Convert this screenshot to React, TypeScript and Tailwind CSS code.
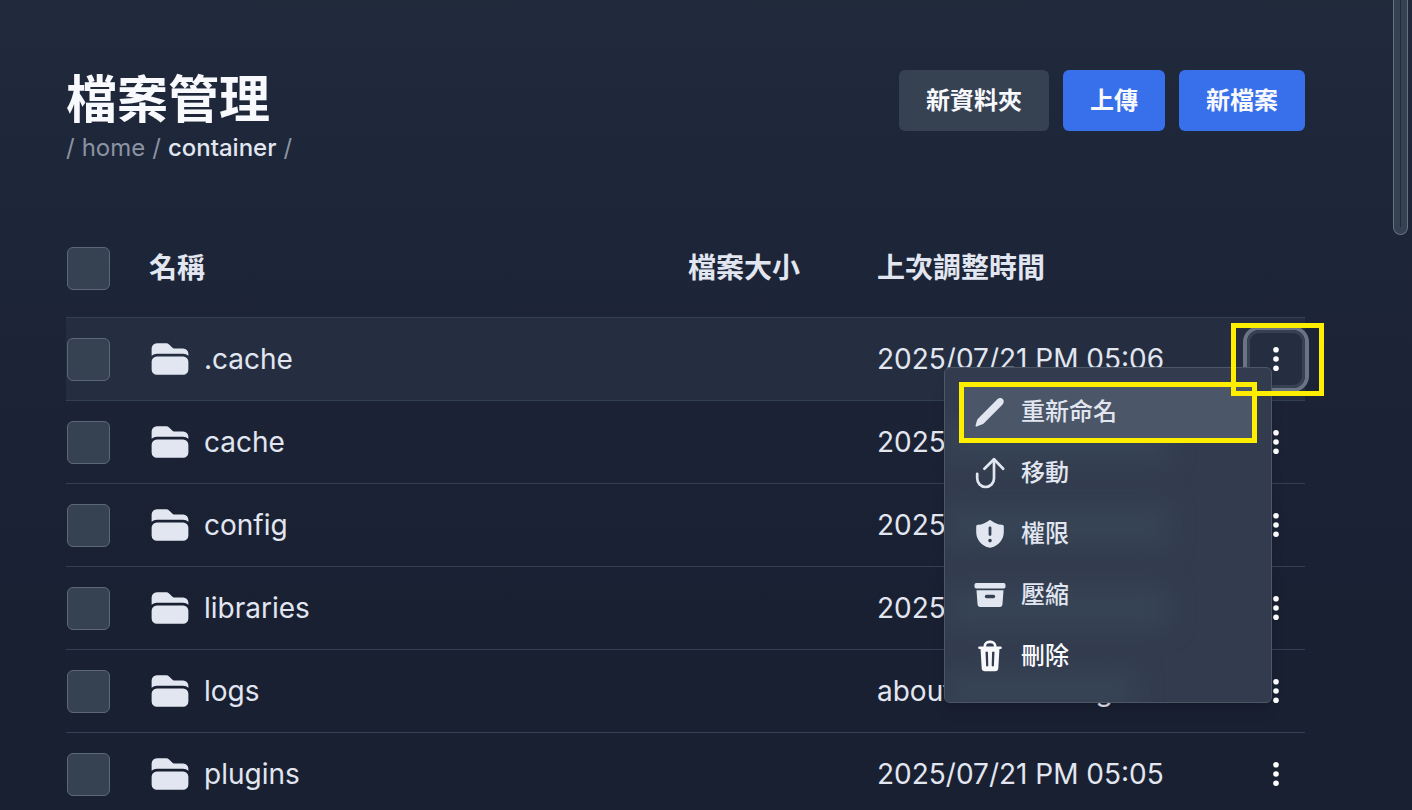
import type { ReactNode } from "react"
import { HiFolder } from "react-icons/hi2"

type Entry = {
  name: string
  modified: string
}

const entries: Entry[] = [
  { name: ".cache", modified: "2025/07/21 PM 05:06" },
  { name: "cache", modified: "2025/07/21 PM 05:05" },
  { name: "config", modified: "2025/07/21 PM 05:06" },
  { name: "libraries", modified: "2025/07/21 PM 05:05" },
  { name: "logs", modified: "about 12 hours ago" },
  { name: "plugins", modified: "2025/07/21 PM 05:05" },
]

function PencilIcon() {
  return (
    <svg viewBox="0 0 32 32" className="size-8" fill="currentColor" aria-hidden="true">
      <path d="M2.6 30.6c-.7.2-1.200-.3-1-1l1.200-4.700c.2-.8.6-1.500 1.200-2.100L22.600 3.900c2-2 4.500-2.400 6.100-1s1.400 4.200-.6 6.200L10.200 27c-.7.7-1.500 1.200-2.500 1.600z" />
    </svg>
  )
}

function MoveIcon() {
  return (
    <svg
      viewBox="0 0 32 32"
      className="size-8"
      fill="none"
      stroke="currentColor"
      strokeWidth="2.7"
      strokeLinecap="round"
      strokeLinejoin="round"
      aria-hidden="true"
    >
      <path d="M3.200 16.800v4.800a8.400 8.400 0 0 0 16.800 0V2.400" />
      <path d="M10.400 11.800L20 2.200l9.200 9.600" />
    </svg>
  )
}

function ShieldIcon() {
  return (
    <svg viewBox="0 0 32 32" className="size-8" fill="currentColor" aria-hidden="true">
      <path
        fillRule="evenodd"
        d="M14.600 2.700a2.200 2.200 0 0 1 2.800 0c3 2.400 6.500 3.800 10.600 4.100 1 .1 1.800.8 1.800 1.800v5.400c0 7.300-4.900 13.600-12.600 15.600a4.800 4.800 0 0 1-2.400 0C7.100 27.600 2.200 21.300 2.200 14V8.600c0-1 .8-1.700 1.800-1.800 4.100-.3 7.600-1.700 10.600-4.100ZM14.600 9.800v6.800a1.400 1.400 0 0 0 2.800 0V9.800a1.400 1.400 0 0 0-2.800 0ZM16 20.800a1.800 1.800 0 1 0 0 3.600 1.800 1.800 0 0 0 0-3.600Z"
      />
    </svg>
  )
}

function ArchiveIcon() {
  return (
    <svg viewBox="0 0 32 32" className="size-8" fill="currentColor" aria-hidden="true">
      <rect x="0.500" y="4" width="31" height="5.600" rx="1.800" />
      <path
        fillRule="evenodd"
        d="M2.500 11.300h27l-1 13.800a3 3 0 0 1-3 2.900h-19a3 3 0 0 1-3-2.900ZM12.500 15.800a1.700 1.700 0 0 0 0 3.400h7a1.700 1.700 0 0 0 0-3.400Z"
      />
    </svg>
  )
}

function TrashIcon() {
  return (
    <svg viewBox="0 0 32 32" className="size-8" fill="none" stroke="currentColor" aria-hidden="true">
      <path d="M10.800 7.500V6.300a4.400 4.400 0 0 1 4.400-4.400h1.600a4.400 4.400 0 0 1 4.400 4.400v1.200" strokeWidth="2.600" />
      <path d="M5.500 7.800h21" strokeWidth="2.600" strokeLinecap="round" />
      <path
        fill="currentColor"
        stroke="none"
        fillRule="evenodd"
        d="M6.500 8h19l-1.200 20.300a3.200 3.200 0 0 1-3.200 3H10.900a3.200 3.200 0 0 1-3.200-3ZM11.500 11.800l.6 13.600a1 1 0 0 0 2.200 0l-.4-13.600ZM18.100 11.800l-.4 13.600a1 1 0 0 0 2.200 0l.6-13.600Z"
      />
    </svg>
  )
}

const menuItems: { label: string; icon: ReactNode }[] = [
  { label: "重新命名", icon: <PencilIcon /> },
  { label: "移動", icon: <MoveIcon /> },
  { label: "權限", icon: <ShieldIcon /> },
  { label: "壓縮", icon: <ArchiveIcon /> },
  { label: "刪除", icon: <TrashIcon /> },
]

function Checkbox({ label }: { label: string }) {
  return (
    <input
      type="checkbox"
      aria-label={label}
      className="mt-px ml-px block size-[43px] appearance-none rounded-md border border-[#5d6877] bg-[#364252] checked:bg-blue-500"
    />
  )
}

function FileMenu() {
  return (
    <div
      role="menu"
      className="absolute top-[37px] right-[33px] z-10 w-[328px] overflow-hidden rounded-md border border-[#4c5868] bg-[#323c4e] px-[14px] pt-[14px] pb-[15px] text-2xl font-medium text-[#e2e6f0] shadow-lg"
    >
      {/* Frosted glow of the rows underneath */}
      <div aria-hidden="true" className="absolute inset-x-0 top-[54px] flex flex-col gap-[43px] blur-md">
        <div className="h-10 w-56 bg-[#374455]" />
        <div className="h-10 w-56 bg-[#374455]" />
        <div className="h-10 w-56 bg-[#374455]" />
        <div className="h-10 w-48 bg-[#374455]" />
      </div>
      {menuItems.map((item, index) => (
        <button
          key={item.label}
          type="button"
          role="menuitem"
          className={
            index === 0
              ? "relative flex h-[61px] w-full items-center gap-[15px] bg-[#4b5768] px-[15px]"
              : index === menuItems.length - 1
                ? "relative flex h-[61px] w-full items-center gap-[15px] px-[15px] text-[#f8f9fd]"
                : "relative flex h-[61px] w-full items-center gap-[15px] px-[15px]"
          }
        >
          {item.icon}
          <span>{item.label}</span>
          {index === 0 && <span className="absolute inset-0 border-5 border-[#ffee00]" />}
        </button>
      ))}
    </div>
  )
}

function RowActions({ name, open }: { name: string; open: boolean }) {
  return (
    <div className="relative size-[58px]">
      <button
        type="button"
        aria-label={name}
        className={
          open
            ? "flex size-full items-center justify-center rounded-xl border-3 border-[#364252] text-white ring-4 ring-[#6b7484]"
            : "flex size-full items-center justify-center rounded-xl text-white"
        }
      >
        <svg viewBox="0 0 6 24" className="h-6 w-[6px]" fill="currentColor" aria-hidden="true">
          <circle cx="3" cy="2.800" r="2.800" />
          <circle cx="3" cy="12" r="2.800" />
          <circle cx="3" cy="21.200" r="2.800" />
        </svg>
      </button>
      {open && (
        <>
          <FileMenu />
          <span className="pointer-events-none absolute -top-[7px] -right-[19px] -bottom-2 -left-4 z-20 border-5 border-[#ffee00]" />
        </>
      )}
    </div>
  )
}

export default function App() {
  return (
    <main className="relative h-screen overflow-hidden bg-linear-to-b from-[#202a3b] via-[#1d2538] via-30% to-[#192032] to-75% pt-[70px] pr-[107px] pl-[66px] font-['Inter','Noto_Sans_CJK_TC',sans-serif] text-[#e2e6f0]">
      <header className="flex items-start justify-between">
        <div>
          <h1 className="text-[51px] leading-[60px] font-bold text-[#f8f9fd]">檔案管理</h1>
          <nav className="flex gap-[7px] text-2xl leading-9 text-[#8b93a3]">
            <span>/</span>
            <a href="#home">home</a>
            <span>/</span>
            <a href="#container" className="font-medium text-[#e2e6f0]">
              container
            </a>
            <span>/</span>
          </nav>
        </div>
        <div className="flex gap-[14px] text-2xl font-bold text-[#f8f9fd]">
          <button type="button" className="h-[61px] rounded-md bg-[#364252] px-[27px]">
            新資料夾
          </button>
          <button type="button" className="h-[61px] rounded-md bg-[#386fea] px-[27px]">
            上傳
          </button>
          <button type="button" className="h-[61px] rounded-md bg-[#386fea] px-[27px]">
            新檔案
          </button>
        </div>
      </header>

      <table className="mt-[53px] w-full table-fixed border-collapse text-left text-[28px]">
        <colgroup>
          <col className="w-[83px]" />
          <col />
          <col className="w-[189px]" />
          <col className="w-[370px]" />
          <col className="w-[58px]" />
        </colgroup>
        <thead>
          <tr className="h-[98px] leading-10">
            <th className="p-0">
              <Checkbox label="名稱" />
            </th>
            <th className="p-0 font-bold">名稱</th>
            <th className="p-0 font-bold">檔案大小</th>
            <th className="p-0 font-bold">上次調整時間</th>
            <td className="p-0" />
          </tr>
        </thead>
        <tbody>
          {entries.map((entry, index) => (
            <tr
              key={entry.name}
              className={
                index === 0
                  ? "h-[83px] border-t border-[#334052] bg-[#242e40]"
                  : "h-[83px] border-t border-[#334052]"
              }
            >
              <td className="p-0">
                <Checkbox label={entry.name} />
              </td>
              <td className="p-0">
                <a href={`#${entry.name}`} className="flex items-center gap-[13px]">
                  <HiFolder className="size-[42px]" />
                  {entry.name}
                </a>
              </td>
              <td className="p-0" />
              <td className="p-0 whitespace-nowrap">{entry.modified}</td>
              <td className="p-0">
                <RowActions name={entry.name} open={index === 0} />
              </td>
            </tr>
          ))}
        </tbody>
      </table>

      {/* Scrollbar thumb */}
      <div className="absolute top-0 right-1 flex h-[235px] w-[15px] justify-center rounded-b-lg border border-t-0 border-[#667081] bg-[#364252] pb-[7px]">
        <div className="w-px bg-[#202a3b]" />
      </div>
    </main>
  )
}
